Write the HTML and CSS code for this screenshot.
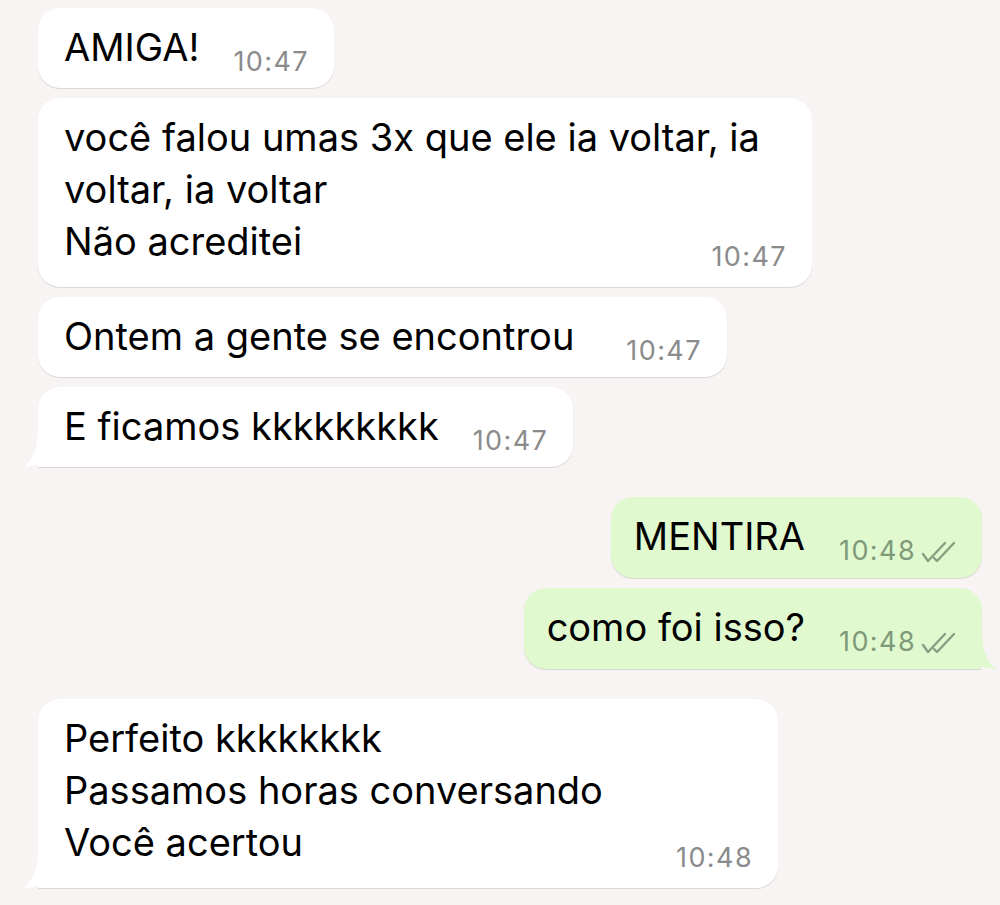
FILE: index.html
```html
<!DOCTYPE html>
<html lang="pt-BR">
<head>
    <meta charset="UTF-8">
    <meta name="viewport" content="width=device-width, initial-scale=1.0">
    <title>Conversa</title>
    <link rel="stylesheet" href="styles.css">
</head>
<body>
    <!-- Chat thread -->
    <main class="chat">
        <div class="bubble in">
            <span class="text">AMIGA!</span><span class="time">10:47</span>
        </div>

        <div class="bubble in multi long">
            <div class="text">você falou umas 3x que ele ia voltar, ia<br>voltar, ia voltar<br>Não acreditei</div>
            <div class="time">10:47</div>
        </div>

        <div class="bubble in">
            <span class="text">Ontem a gente se encontrou</span><span class="time wide-gap">10:47</span>
        </div>

        <div class="bubble in tail-left">
            <span class="text">E ficamos kkkkkkkkk</span><span class="time">10:47</span>
            <svg class="tail" width="34" height="40" viewBox="0 0 34 40"><path d="M14 0 C14 18 11 31 0 39.6 C7 40.2 13 38 18 35.5 C21 38 25 40 34 40 L34 0 Z" fill="#fff"/></svg>
        </div>

        <div class="bubble out group-start">
            <span class="text">MENTIRA</span><span class="time">10:48<svg class="ticks" width="38" height="22" viewBox="0 0 38 22"><path d="M3 13 L8 20 L25 2 M14 17 L17 20 L34 2" fill="none" stroke="#86a082" stroke-width="2.4" stroke-linecap="round" stroke-linejoin="round"/></svg></span>
        </div>

        <div class="bubble out tail-right">
            <span class="text">como foi isso?</span><span class="time">10:48<svg class="ticks" width="38" height="22" viewBox="0 0 38 22"><path d="M3 13 L8 20 L25 2 M14 17 L17 20 L34 2" fill="none" stroke="#86a082" stroke-width="2.4" stroke-linecap="round" stroke-linejoin="round"/></svg></span>
            <svg class="tail" width="34" height="40" viewBox="0 0 34 40"><path d="M20 0 C20 18 23 31 34 39.6 C27 40.2 21 38 16 35.5 C13 38 9 40 0 40 L0 0 Z" fill="#e0f9cf"/></svg>
        </div>

        <div class="bubble in multi story tail-left group-start">
            <div class="text">Perfeito kkkkkkkk<br>Passamos horas conversando<br>Você acertou</div>
            <div class="time">10:48</div>
            <svg class="tail" width="34" height="40" viewBox="0 0 34 40"><path d="M14 0 C14 18 11 31 0 39.6 C7 40.2 13 38 18 35.5 C21 38 25 40 34 40 L34 0 Z" fill="#fff"/></svg>
        </div>
    </main>
</body>
</html>
```

FILE: styles.css
```css
/* Page */
body {
    margin: 0;
    background-color: #f8f4f3;
    font-family: Inter, "Liberation Sans", Arial, sans-serif;
    color: #000;
}

.chat {
    display: flex;
    flex-direction: column;
    gap: 10px;
    padding: 8px 18px 16px 38px;
}

/* Bubbles */
.bubble {
    position: relative;
    align-self: flex-start;
    box-sizing: border-box;
    padding: 13px 25px 15px 26px;
    border-radius: 22px;
    background-color: #fff;
    box-shadow: 0 1px 1px rgba(0, 0, 0, 0.13);
    font-size: 38px;
    line-height: 52px;
    white-space: nowrap;
}

.bubble.out {
    align-self: flex-end;
    background-color: #e0f9cf;
    padding-left: 23px;
    padding-right: 24px;
}

.group-start {
    margin-top: 20px;
}

.time {
    display: inline-block;
    margin-left: 34px;
    font-size: 27px;
    letter-spacing: 1.4px;
    line-height: 20px;
    vertical-align: -10px;
    color: #8b8b8b;
}

.time.wide-gap {
    margin-left: 52px;
}

.out .time {
    color: #7f9979;
}

.ticks {
    vertical-align: -3px;
    margin-left: 4px;
}

/* Multi-line bubbles: time sits on its own row */
.multi .text {
    display: block;
}

.multi .time {
    display: block;
    margin: -23px 0 0 0;
    text-align: right;
    line-height: 26px;
    vertical-align: baseline;
}

.multi {
    padding-bottom: 17px;
}

.long {
    width: 774px;
}

.story {
    width: 740px;
}

/* Tails */
.tail {
    position: absolute;
    bottom: 0;
}

.tail-left {
    border-bottom-left-radius: 0;
}

.tail-left .tail {
    left: -14px;
}

.tail-right {
    border-bottom-right-radius: 0;
}

.tail-right .tail {
    right: -14px;
}
```
